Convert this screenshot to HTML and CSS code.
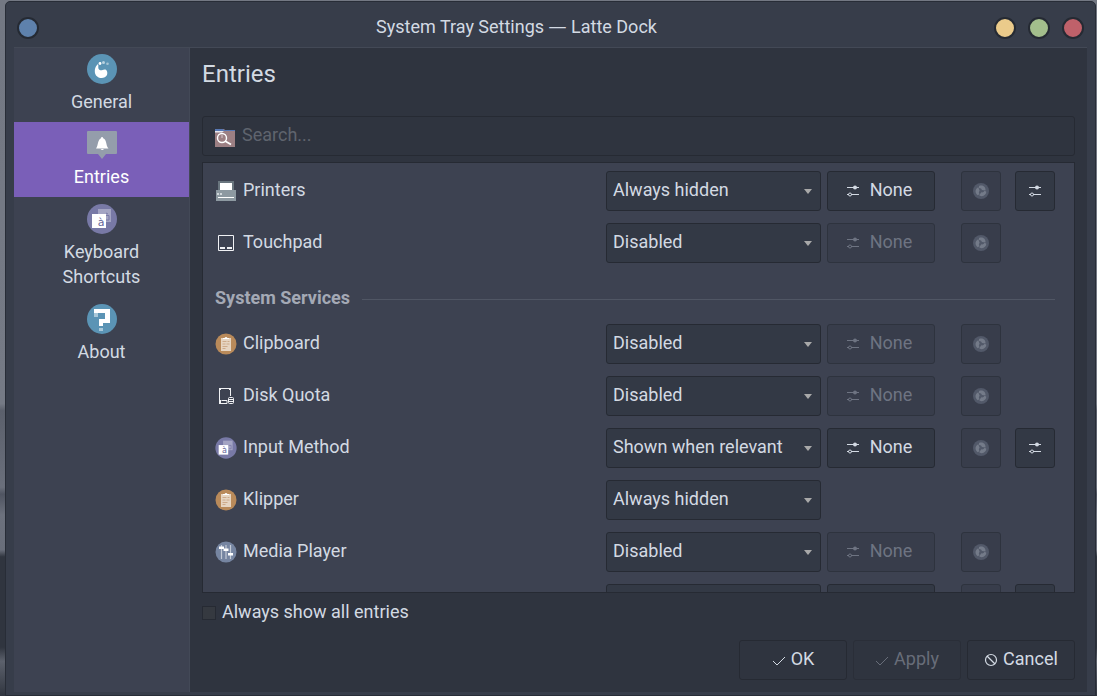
FILE: index.html
```html
<!DOCTYPE html>
<html lang="en">
<head>
<meta charset="utf-8">
<title>System Tray Settings — Latte Dock</title>
<link rel="stylesheet" href="styles.css">
</head>
<body>
<svg class="defs" aria-hidden="true">
  <symbol id="sliders" viewBox="0 0 14 14"><path d="M1 3.500h12M5 10.500h8M1 10.500h2" stroke="currentColor" fill="none"/><circle cx="9" cy="3.500" r="2" fill="currentColor"/><circle cx="4" cy="10.500" r="1.500" stroke="currentColor" fill="none"/></symbol>
  <symbol id="fan" viewBox="0 0 16 16"><circle cx="8" cy="8" r="8" fill="#525969"/><g fill="#747b89"><path id="blade" d="M6 3C9 1.500 13 3.500 12.500 7.500L9 7Q8.500 5 6 5Z"/><use href="#blade" transform="rotate(120 8 8)"/><use href="#blade" transform="rotate(240 8 8)"/></g></symbol>
  <symbol id="clipboard" viewBox="0 0 22 22"><circle cx="11" cy="11" r="10.500" fill="#b98a5a"/><rect x="6" y="5" width="10" height="13" fill="#e6d5c2"/><path d="M8 6V5h1.500q1.500-2 3 0H14v1z" fill="#fff"/><path d="M7.500 8.500h4M12.500 8.500h2M7.500 11h3M11.500 11h3M7.500 13.500h5M7.500 15.500h3" stroke="#c9a583" stroke-width=".9"/></symbol>
  <symbol id="check" viewBox="0 0 14 14"><path d="M1 8l4 4 8-8" fill="none" stroke="currentColor"/></symbol>
</svg>

<div class="window">
  <header class="titlebar">
    <button class="dot blue" aria-label="Window menu"></button>
    <div class="caption">System Tray Settings <span class="dash">—</span> Latte Dock</div>
    <div class="controls">
      <button class="dot yellow" aria-label="Minimize"></button>
      <button class="dot green" aria-label="Maximize"></button>
      <button class="dot red" aria-label="Close"></button>
    </div>
  </header>

  <div class="content">
    <nav class="sidebar">
      <a class="nav-item" href="#general">
        <svg class="nav-icon" viewBox="0 0 30 30"><circle cx="15" cy="15" r="15" fill="#5b94b5"/><path d="M11 10C7.500 13 7 18 9 21.500C12 25 18 25 20 21C21 18 19.500 15 17.500 15.500C15 16.200 14 17 12 15.500C10.500 14 12 12 11 10Z" fill="#fff"/><circle cx="13" cy="9.500" r="1.400" fill="#fff"/><circle cx="16.500" cy="8.500" r="1.500" fill="#b9d2e0"/><circle cx="20.500" cy="9.800" r="1.300" fill="#a5c4d5"/></svg>
        <span>General</span>
      </a>
      <a class="nav-item selected" href="#entries" aria-current="page">
        <svg class="nav-icon" viewBox="0 0 30 30"><path d="M1 2h28q1 0 1 1v21q0 1-1 1H19l-4 5-4-5H1q-1 0-1-1V3q0-1 1-1z" fill="#949dab"/><path d="M15 8q1 0 1.200 1.200C20 10.500 18.500 16 21.500 19.500H9C11.500 16 10.500 10.500 14 9.200Q14 8 15 8zM13.500 20h3.500q-1.700 2-3.500 0z" fill="#fff"/></svg>
        <span>Entries</span>
      </a>
      <a class="nav-item" href="#shortcuts">
        <svg class="nav-icon" viewBox="0 0 30 30"><circle cx="15" cy="15" r="15" fill="#7879a6"/><rect x="11" y="5" width="13" height="13" fill="#a3a4c3"/><path d="M19 9l2 1M18.500 11.500H22V16h-3" stroke="#7879a6" fill="none"/><rect x="5" y="10" width="14" height="14" fill="#fff"/><text x="14" y="22" text-anchor="middle" class="glyph">à</text></svg>
        <span>Keyboard<br>Shortcuts</span>
      </a>
      <a class="nav-item" href="#about">
        <svg class="nav-icon" viewBox="0 0 30 30"><circle cx="15" cy="15" r="15" fill="#5b94b5"/><path d="M7 5h16v14h-7v3h-4v-7h6V9H7z" fill="#fff"/><path d="M7 9h4v4H7zM12 24h4v3h-4z" fill="#a9c8d9"/></svg>
        <span>About</span>
      </a>
    </nav>

    <main class="main">
      <h1>Entries</h1>
      <label class="search">
        <svg class="icon" viewBox="0 0 22 22"><path d="M1 4h9l1 1h10v17H1z" fill="#9c7f83"/><path d="M1 4h8l1 1h11v1H1z" fill="#5878b4"/><path d="M1 6h9L8 7.500H1z" fill="#e8e8f0"/><circle cx="8" cy="13" r="4.500" fill="none" stroke="#fff" stroke-width="1.400"/><path d="M11 16l6 3.500" stroke="#fff" stroke-width="1.800"/><path d="M8 10v3" stroke="#fff" opacity=".6"/></svg>
        <input type="search" placeholder="Search..." aria-label="Search">
      </label>

      <section class="list" aria-label="Tray entries">
        <div class="row">
          <svg class="icon" viewBox="0 0 22 22"><path d="M3 10V1h16v9z" fill="#69757e"/><path d="M1 10h20v11H1z" fill="#8d99a1"/><path d="M5 3h12v7H5zM3 17h16v1H3z" fill="#fff"/><path d="M2 13h2v2H2zM5 13h2v2H5z" fill="#cfd6da"/></svg>
          <label class="name" for="e1">Printers</label>
          <span class="select"><select id="e1"><option>Always hidden</option></select></span>
          <button class="btn key"><svg class="glyph-icon"><use href="#sliders"/></svg>None</button>
          <button class="btn square" disabled aria-label="Reset"><svg class="fan"><use href="#fan"/></svg></button>
          <button class="btn square" aria-label="Configure Printers"><svg class="glyph-icon"><use href="#sliders"/></svg></button>
        </div>
        <div class="row">
          <svg class="icon" viewBox="0 0 22 22"><path d="M3.500 3.500h15v15h-15z" fill="none" stroke="#f0f1f4"/><path d="M5 15h5v2H5zM12 15h5v2h-5z" fill="#f0f1f4"/></svg>
          <label class="name" for="e2">Touchpad</label>
          <span class="select"><select id="e2"><option>Disabled</option></select></span>
          <button class="btn key" disabled><svg class="glyph-icon"><use href="#sliders"/></svg>None</button>
          <button class="btn square" disabled aria-label="Reset"><svg class="fan"><use href="#fan"/></svg></button>
        </div>
        <h2>System Services</h2>
        <div class="row">
          <svg class="icon"><use href="#clipboard"/></svg>
          <label class="name" for="e3">Clipboard</label>
          <span class="select"><select id="e3"><option>Disabled</option></select></span>
          <button class="btn key" disabled><svg class="glyph-icon"><use href="#sliders"/></svg>None</button>
          <button class="btn square" disabled aria-label="Reset"><svg class="fan"><use href="#fan"/></svg></button>
        </div>
        <div class="row">
          <svg class="icon" viewBox="0 0 22 22"><path d="M15.500 11V3.500h-11v15H12v-3H6.500" fill="none" stroke="#f0f1f4"/><path d="M4 3h2v2H4zM14 3h2v2h-2zM4 8h1v6H4zM4 15h2v4H4z" fill="#f0f1f4"/><rect x="13.500" y="12.500" width="5" height="6" rx="1" fill="none" stroke="#f0f1f4"/><path d="M13 14.500h6M13 16.500h6" stroke="#f0f1f4"/></svg>
          <label class="name" for="e4">Disk Quota</label>
          <span class="select"><select id="e4"><option>Disabled</option></select></span>
          <button class="btn key" disabled><svg class="glyph-icon"><use href="#sliders"/></svg>None</button>
          <button class="btn square" disabled aria-label="Reset"><svg class="fan"><use href="#fan"/></svg></button>
        </div>
        <div class="row">
          <svg class="icon" viewBox="0 0 30 30"><circle cx="15" cy="15" r="14.500" fill="#7879a6"/><rect x="11" y="5" width="13" height="13" fill="#a3a4c3"/><path d="M18.500 11.500H22V16h-3" stroke="#7879a6" fill="none"/><rect x="5" y="11" width="13" height="13" fill="#fff"/><text x="13" y="22" text-anchor="middle" class="glyph">à</text></svg>
          <label class="name" for="e5">Input Method</label>
          <span class="select"><select id="e5"><option>Shown when relevant</option></select></span>
          <button class="btn key"><svg class="glyph-icon"><use href="#sliders"/></svg>None</button>
          <button class="btn square" disabled aria-label="Reset"><svg class="fan"><use href="#fan"/></svg></button>
          <button class="btn square" aria-label="Configure Input Method"><svg class="glyph-icon"><use href="#sliders"/></svg></button>
        </div>
        <div class="row">
          <svg class="icon"><use href="#clipboard"/></svg>
          <label class="name" for="e6">Klipper</label>
          <span class="select"><select id="e6"><option>Always hidden</option></select></span>
        </div>
        <div class="row">
          <svg class="icon" viewBox="0 0 22 22"><circle cx="11" cy="11" r="10.500" fill="#7685a1"/><path d="M6.500 4v14M11 4v14M15.500 4v14" stroke="#c3cad6" stroke-width="1.200"/><path d="M4 5.500h5v2.500H4zM8.500 7.500h5V10h-5zM13 12h5v2.500h-5z" fill="#fff"/></svg>
          <label class="name" for="e7">Media Player</label>
          <span class="select"><select id="e7"><option>Disabled</option></select></span>
          <button class="btn key" disabled><svg class="glyph-icon"><use href="#sliders"/></svg>None</button>
          <button class="btn square" disabled aria-label="Reset"><svg class="fan"><use href="#fan"/></svg></button>
        </div>
        <div class="row">
          <span></span>
          <span class="name"></span>
          <span class="select"><select aria-label="Visibility"></select></span>
          <button class="btn key" aria-label="Shortcut"></button>
          <button class="btn square" disabled aria-label="Reset"></button>
          <button class="btn square" aria-label="Configure"></button>
        </div>
      </section>

      <label class="show-all"><input type="checkbox">Always show all entries</label>

      <footer class="actions">
        <button class="btn flat"><svg class="glyph-icon"><use href="#check"/></svg>OK</button>
        <button class="btn flat" disabled><svg class="glyph-icon"><use href="#check"/></svg>Apply</button>
        <button class="btn flat"><svg class="glyph-icon" viewBox="0 0 14 14"><circle cx="7" cy="7" r="5.500" fill="none" stroke="currentColor" stroke-width="1.200"/><path d="M3 3l8 8" stroke="currentColor" stroke-width="1.200"/></svg>Cancel</button>
      </footer>
    </main>
  </div>
</div>
</body>
</html>
```

FILE: styles.css
```css
* { box-sizing: border-box; }

body {
  margin: 0;
  height: 100vh;
  padding: 1px 1px 0 5px;
  display: flex;
  background: linear-gradient(#737883 0, #757a85 58%, #5b606c 59%, #6a6f7b 70%, #4f5461 71%, #6c717d 74%, #696e7a 79%, #30353f 80%, #30353f 93%, #5c616c 95%, #30353f 100%);
  font: 18px/25px Roboto, "Noto Sans", sans-serif;
  color: #d3dae3;
}

button, input, select { font: inherit; color: inherit; }

.defs { position: absolute; width: 0; height: 0; }

.window {
  flex: 1;
  min-width: 0;
  display: flex;
  flex-direction: column;
  padding: 0 8px 3px;
  border: 1px solid #282d37;
  border-radius: 5px 5px 0 0;
  background: #373d4a;
}

.titlebar {
  display: flex;
  align-items: center;
  height: 45px;
  padding: 6px 3px 0;
}
.caption { flex: 1; padding-bottom: 2px; text-align: center; }
.dash { font-family: "Noto Sans", sans-serif; line-height: 1; }
.controls { display: flex; gap: 12px; }
.dot {
  width: 22px;
  height: 22px;
  margin: 0;
  padding: 0;
  border: 2px solid #252a33;
  border-radius: 50%;
}
.blue { background: #5e81ac; }
.yellow { background: #ebcb8b; }
.green { background: #a3be8c; }
.red { background: #bf616a; }

.content {
  flex: 1;
  min-height: 0;
  display: flex;
  border-top: 1px solid #434956;
}

.sidebar { width: 176px; background: #3d4251; border-right: 1px solid #434957; }
.nav-item {
  display: flex;
  flex-direction: column;
  align-items: center;
  gap: 5px;
  padding: 7px 0 8px;
  color: inherit;
  text-align: center;
  text-decoration: none;
}
.nav-item:first-child { padding-top: 6px; }
.selected { background: #7a5fb8; color: #fff; }
.nav-icon { width: 30px; height: 30px; }
.glyph { font: 11px "DejaVu Sans", sans-serif; fill: #65659a; }

.main {
  flex: 1;
  min-width: 0;
  display: flex;
  flex-direction: column;
  padding: 12px;
  background: #2f343f;
}

h1 { margin: 0 0 28px; font-size: 24px; line-height: 28px; font-weight: 400; }

.search {
  display: flex;
  align-items: center;
  gap: 6px;
  height: 40px;
  flex: none;
  padding: 0 11px;
  margin-bottom: 6px;
  border: 1px solid #262a33;
  border-radius: 3px;
}
.search input {
  flex: 1;
  min-width: 0;
  padding: 0 0 4px;
  border: 0;
  outline: 0;
  background: none;
}
.search input::placeholder { color: #5f646e; opacity: 1; }

.list {
  flex: 1;
  min-height: 0;
  overflow: hidden;
  display: flex;
  flex-direction: column;
  gap: 12px;
  padding: 8px 19px 0 12px;
  border: 1px solid #262a33;
  background: #3d4251;
}
.row {
  flex: none;
  display: grid;
  grid-template-columns: 22px minmax(0, 1fr) 215px 114px 66px 54px;
  align-items: center;
  height: 40px;
}
.icon { width: 22px; height: 22px; flex: none; }
.name { padding: 0 0 4px 6px; }

.select { position: relative; height: 40px; }
.select::after {
  content: "";
  position: absolute;
  right: 9px;
  top: 18px;
  border: 4px solid transparent;
  border-top: 5px solid #a9a9a9;
  border-bottom: 0;
  pointer-events: none;
}
select {
  width: 100%;
  height: 100%;
  padding: 0 24px 4px 6px;
  appearance: none;
  background: #333945;
  border: 1px solid #262a33;
  border-radius: 3px;
}

.btn {
  display: flex;
  align-items: center;
  justify-content: center;
  height: 40px;
  padding: 0 0 4px;
  background: #333945;
  border: 1px solid #262a33;
  border-radius: 3px;
}
.key { margin-left: 6px; padding-right: 4px; gap: 10px; }
.square { width: 40px; padding: 0; justify-self: end; }
.btn:disabled { background: #383d4b; border-color: #2e333e; color: #6e7482; }
.glyph-icon { width: 14px; height: 14px; }
.key .glyph-icon, .actions .glyph-icon { margin-top: 4px; }
.fan { width: 16px; height: 16px; }

h2 {
  display: flex;
  align-items: center;
  gap: 12px;
  flex: none;
  margin: 0;
  padding-top: 9px;
  font-size: 18px;
  line-height: 28px;
  font-weight: 700;
  color: #a4a9b5;
}
h2::after { content: ""; flex: 1; height: 1px; margin-top: 3px; background: #505664; }

.show-all { display: flex; align-items: center; gap: 6px; align-self: flex-start; margin: 6px 0 16px; }
.show-all input {
  appearance: none;
  width: 14px;
  height: 14px;
  margin: 3px 0 0;
  background: #353940;
  border: 1px solid #262a33;
}

.actions { display: flex; justify-content: flex-end; gap: 6px; }
.flat { width: 108px; gap: 5px; background: none; }
.flat:disabled { background: none; border-color: #2a2e38; color: #686d79; }
```
